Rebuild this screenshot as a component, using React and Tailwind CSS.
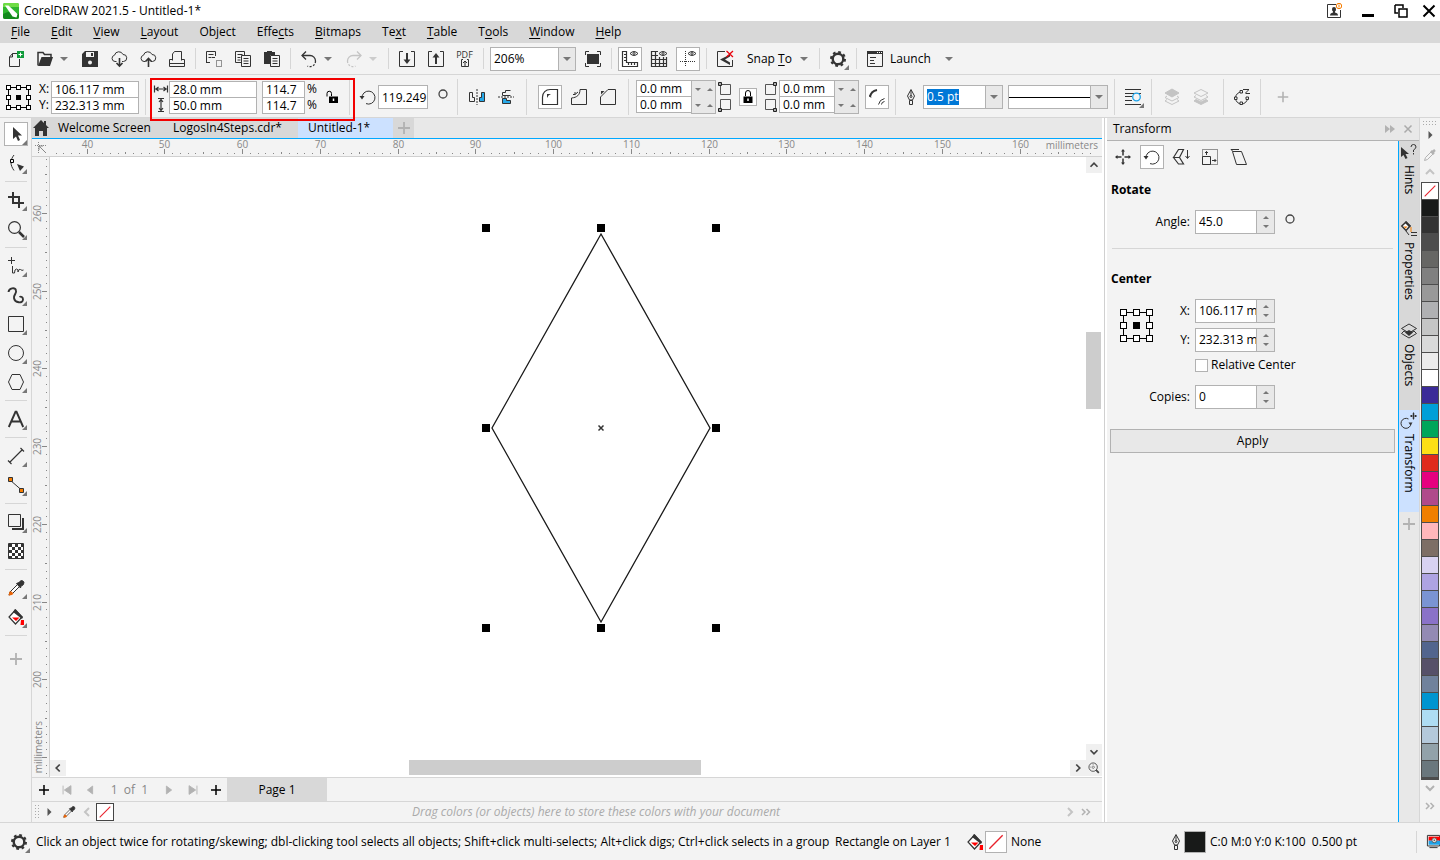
import { useState } from "react";

const INK = "#333";

const icons = {
    newDoc: (
        <>
            <path d="M9 2.5H4.5L1.500 6v9.500h10V8" />
            <path d="M4.500 2.500V6H1.500" />
            <path d="M9 0h7v7H9z" fill="#0f9b3a" stroke="none" />
            <path d="M12.500 1.500v4M10.500 3.500h4" stroke="#fff" />
        </>
    ),
    open: (
        <>
            <path d="M1 14.500V1.500h5l1.500 2H14v3" strokeWidth="1.500" />
            <path d="M1 15 4.500 6H16l-3 9z" fill={INK} stroke="none" />
        </>
    ),
    save: (
        <path d="M3 0h13v16H0V3zM4 1v5h8V1zM9 2v3h2V2zM8 9.500a2 2 0 1 0 0 4 2 2 0 0 0 0-4z" fill={INK} fillRule="evenodd" stroke="none" />
    ),
    cloudDown: (
        <>
            <path d="M5.500 10.500H4a3.200 3.200 0 0 1-.5-6.300A4.500 4.500 0 0 1 12 3.500a3.500 3.500 0 0 1 .5 7H11" />
            <path d="M8.500 7v8M5.500 12l3 3 3-3" strokeWidth="1.600" />
        </>
    ),
    cloudUp: (
        <>
            <path d="M5.500 10.500H4a3.200 3.200 0 0 1-.5-6.300A4.500 4.500 0 0 1 12 3.500a3.500 3.500 0 0 1 .5 7H11" />
            <path d="M8.500 16V8M5.500 10.500l3-3 3 3" strokeWidth="1.600" />
        </>
    ),
    print: (
        <>
            <path d="M3.500 9.500V3l2-2.500h7v9" />
            <path d="M3.500 8.500H.5v7h15v-7h-3M.5 12.500h15" />
        </>
    ),
    cut: (
        <>
            <path d="M4 11.500H.5v-11h9V5M2.500 3.500h5M2.500 6.500h3" />
            <path d="M10.500 9.500h5v6h-5z" strokeDasharray="1 1" />
            <path d="M.5 12v-3M6 6.500h3" />
        </>
    ),
    copy: (
        <>
            <path d="M6 11.500H.5v-11h9V4M2.500 3.500h5M2.500 6.500h3M2.500 9h3" />
            <path d="M6.500 4.500h9v11h-9zM8.500 7.500h5M8.500 10h5M8.500 12.500h5" />
        </>
    ),
    paste: (
        <>
            <path d="M0 1h3V0h5v1h3v3H6v9H0z" fill={INK} stroke="none" />
            <path d="M6.500 4.500h9v11h-9zM8.500 7.500h5M8.500 10h5M8.500 12.500h5" />
        </>
    ),
    undo: (
        <>
            <path d="M1.500 4.500H9a5.500 5.500 0 0 1 5.500 5.500" strokeWidth="1.300" />
            <path d="M14.500 10a5.500 5.500 0 0 1-8 5" strokeDasharray="2 1.500" strokeWidth="1.300" />
            <path d="M5 .5l-4 4 4 4" strokeWidth="1.300" />
        </>
    ),
    redo: (
        <>
            <path d="M14.500 4.500H7A5.500 5.500 0 0 0 1.500 10" strokeWidth="1.300" />
            <path d="M1.500 10a5.500 5.500 0 0 0 8 5" strokeDasharray="2 1.500" strokeWidth="1.300" />
            <path d="M11 .5l4 4-4 4" strokeWidth="1.300" />
        </>
    ),
    importDoc: (
        <>
            <path d="M4 .5H.5v15h15V.5H12" />
            <path d="M8 2v8" strokeWidth="2" />
            <path d="M4.500 8.500h7L8 13z" fill={INK} stroke="none" />
        </>
    ),
    exportDoc: (
        <>
            <path d="M4 .5H.5v15h15V.5H12" />
            <path d="M8 13V5" strokeWidth="2" />
            <path d="M4.500 6.500h7L8 2z" fill={INK} stroke="none" />
        </>
    ),
    fullScreen: (
        <>
            <path d="M2 3h12v10H2z" fill={INK} stroke="none" />
            <path d="M.5 4V.5H4M12 .5h3.500V4M15.500 12v3.500H12M4 15.500H.5V12" />
        </>
    ),
    rulers: (
        <>
            <path d="M.5.500h4v11h11v4H.5zM2 3.500h2M2 6.500h2M2 9.500h2M6.500 14v-2M9.500 14v-2M12.500 14v-2" strokeWidth="1.200" />
            <path d="M8 2.500q4-4 8 0-4 4-8 0z" />
            <circle cx="12" cy="2.500" r="1" />
        </>
    ),
    grid: (
        <>
            <path d="M7 .5H.5v15h15V6M.5 4.500H7M.5 8.500h15M.5 12.500h15M4.500.500v15M8.500 6v9.500M12.500 6v9.500" strokeWidth="1.200" />
            <path d="M8 2.500q4-4 8 0-4 4-8 0z" />
            <circle cx="12" cy="2.500" r="1" />
        </>
    ),
    guides: (
        <>
            <path d="M5.500 0v16M0 10.500h16" strokeDasharray="1 1" />
            <path d="M8 2.500q4-4 8 0-4 4-8 0z" />
            <circle cx="12" cy="2.500" r="1" />
        </>
    ),
    snapOff: (
        <>
            <path d="M8 .5H.5v15h15V9" />
            <path d="M13 3.500v2L8 8.500l5 3v2.500L3 8.500z" fill={INK} stroke="none" />
            <path d="m9.500 0 6.500 6M16 0 9.500 6" stroke="#e8000b" strokeWidth="1.300" />
        </>
    ),
    gear: (
        <>
            <circle cx="8" cy="8" r="5.300" strokeWidth="2.400" />
            <circle cx="8" cy="8" r="7" strokeWidth="2" strokeDasharray="2.750 2.750" />
        </>
    ),
    launch: (
        <>
            <path d="M.5.500h15v15H.5zM3 6.500h6M3 9.500h4M3 12.500h5" />
            <path d="M0 0h16v3H0z" fill={INK} stroke="none" />
            <path d="M10 1.500h5" stroke="#fff" strokeDasharray="1 1" />
        </>
    ),
    unlock: (
        <>
            <path d="M2 7.500V4.500a2.200 2.200 0 0 1 4.500 0V7" stroke="#000" />
            <path d="M4 7.500h9V14H4z" fill="#000" stroke="none" />
            <path d="M8.500 9.500v2.500" stroke="#fff" strokeWidth="1.500" />
        </>
    ),
    lock: (
        <>
            <path d="M5.500 7V4a2.500 2.500 0 0 1 5 0v3" stroke="#000" />
            <path d="M3.500 7.500h9V14h-9z" fill="#000" stroke="none" />
            <path d="M8 9.500v2.500" stroke="#fff" strokeWidth="1.500" />
        </>
    ),
    rotate: (
        <>
            <path d="M2 9A6.500 6.500 0 1 1 6 14.600" />
            <path d="M-.5 7h5L2 10.500z" fill={INK} stroke="none" />
        </>
    ),
    mirrorH: (
        <>
            <path d="M.5 3.500h3v5h2v4h-5z" />
            <path d="M8 0v16" strokeDasharray="2 1" />
            <path d="M15.500 3.500h-3v5h-2v4h5z" fill="#27a9e8" />
        </>
    ),
    mirrorV: (
        <>
            <path d="M12.500 1.500h-5v2h-3v3h8" />
            <path d="M0 8h16" strokeDasharray="2 1" />
            <path d="M4.500 9.500h4v2h4v3h-8z" fill="#27a9e8" />
        </>
    ),
    roundCorner: (
        <>
            <path d="M.5 15.500V8A7.500 7.500 0 0 1 8 .5h7.500v15z" strokeWidth="1.200" />
            <path d="M5 9V5h4L6.500 6.500z" fill={INK} stroke="none" />
        </>
    ),
    scallop: (
        <>
            <path d="M.5 9v6.500h15V.5H9C9 6 6 8.500.5 9z" />
            <path d="M2 5.500h2V3M4 5.500 7 3" />
        </>
    ),
    chamfer: (
        <>
            <path d="M.5 8v7.500h15V.5H8z" />
            <path d="M1 5.500V2h3.500z" fill={INK} stroke="none" />
        </>
    ),
    relCorner: (
        <>
            <path d="M1 8q1-6 7-7" strokeWidth="2" />
            <path d="M.5 6 2 8.500" />
            <path d="M9.500 15.500q1-5 6-6M12.500 15.500q0-2.500 3-3" />
        </>
    ),
    pen: (
        <>
            <path d="M8 .5 4.500 7l2 4h3l2-4zM6.500 11.500h3v4h-3zM8 2v5" />
            <circle cx="8" cy="7.500" r="1" />
        </>
    ),
    wrap: (
        <>
            <path d="M0 .5h16M0 4.500h16M0 7.500h7M0 11.500h7M0 15.500h16" />
            <circle cx="11.500" cy="8" r="3.800" fill="#f3f3f3" stroke="#1ca3ea" strokeWidth="1.300" />
        </>
    ),
    layersFront: (
        <>
            <path d="m8 0 7 4-7 4-7-4z" fill="#c4c4c4" />
            <path d="m3 7-2 1.500 7 3.500 7-3.500L13 7M3 10.500 1 12l7 3.500 7-3.500-2-1.500" />
        </>
    ),
    layersBack: (
        <>
            <path d="m8 .5 7 3.500-7 3.500L1 4zM3 6.500 1 8l7 3.500L15 8l-2-1.500" />
            <path d="m3 10.500-2 1.500 7 3.500 7-3.500-2-1.500-5 2.500z" fill="#c4c4c4" />
        </>
    ),
    toCurves: (
        <>
            <path d="M7.500 3a6 6 0 0 0-6 6 6 6 0 0 0 6 6 6 6 0 0 0 6-6M9 .5h6M11.500 4.500H16M14.500 1l-3 3" />
            <path d="M6 1.500h2.500V4H6zM.5 8H3v2.500H.5zM12 8h2.500v2.500H12zM6 13h2.500v2.500H6z" fill="#f3f3f3" />
        </>
    ),
    pick: <path d="M5 1v12l3-2.500 2 4.500 2-1-2-4.500h4z" fill={INK} stroke="none" />,
    shape: (
        <>
            <path d="M6 0C2 5 2 10 6 15.500" />
            <path d="M2.500 4.500h3v3h-3z" fill="#f3f3f3" stroke="#000" />
            <path d="m9 9 7 2.500-4 4.500z" fill={INK} stroke="none" />
        </>
    ),
    crop: (
        <path d="M0 5h11v11M5 0v11h11" strokeWidth="2" />
    ),
    zoom: (
        <>
            <circle cx="6.500" cy="6.500" r="5.900" strokeWidth="1.200" />
            <path d="m11 11 5 5" strokeWidth="2.500" />
        </>
    ),
    freehand: (
        <>
            <path d="M3.500-1v7M0 2.500h7" />
            <path d="M4.500 8v7h2q0-4 2-4t1.500 3q1-4 2.500-2.500t3 .5" />
        </>
    ),
    artistic: (
        <path d="M.5 5C1 1 7 0 8 3.500c1 3-2.500 4-2 7.500.8 5 9 6 9 1.500 0-2.500-2-3.500-3.500-2.500" strokeWidth="1.900" />
    ),
    rect: <path d="M.5.500h15v15H.5z" />,
    ellipse: <circle cx="8" cy="8" r="7.500" />,
    polygon: <path d="M4 .5h8l3.500 7.500-3.500 7.500H4L.5 8z" />,
    textTool: <path d="M.8 16 7.500.8h1L15.200 16M3.500 10.500h9" strokeWidth="1.900" />,
    lineTool: <path d="m1.500 14.500 13-13M0 12.500 3.500 16M12.500 0 16 3.500" strokeWidth="1.200" />,
    connector: (
        <>
            <path d="m2 3 11.500 10" />
            <path d="M.5.500h4v4h-4zM11.500 11.500h4v4h-4z" fill="#f57c00" />
        </>
    ),
    shadow: (
        <>
            <path d="M.5.500h12v12H.5z" />
            <path d="M15 4v11H4" strokeWidth="2" />
        </>
    ),
    transparency: (
        <>
            <path d="M.5.500h15v15H.5z" fill="#fff" />
            <path
                d="M1 1h3v3H1zM7 1h3v3H7zM13 1h3v3h-3zM4 4h3v3H4zM10 4h3v3h-3zM1 7h3v3H1zM7 7h3v3H7zM13 7h3v3h-3zM4 10h3v3H4zM10 10h3v3h-3zM1 13h3v3H1zM7 13h3v3H7zM13 13h3v3h-3z"
                fill={INK}
                stroke="none"
            />
        </>
    ),
    dropper: (
        <>
            <path d="m1 15 1-3 7.500-7.500 2 2L4 14z" fill="#fff" />
            <path d="m.5 15.500 1-4h2l2 2-1.500 1.500z" fill="#e8650a" stroke="none" />
            <path d="m8.500 3.500 2.500-1Q13-.5 15 1t0 4l-2 1-.5 2z" fill={INK} />
        </>
    ),
    fill: (
        <>
            <path d="M7.500 1 1 8l6.500 7L14 8z" fill="#fff" strokeWidth="1.200" />
            <path d="m7 0 8 8-1 2-9-7z" fill={INK} stroke="none" />
            <path d="M4 8.500h7.500L8 12zM13 11l3 0v5h-3.500z" fill="#f00" stroke="none" />
        </>
    ),
    position: (
        <>
            <path d="M8 1v5.500M8 9.500V15M1 8h5.500M9.500 8H15" strokeWidth="1.500" />
            <path d="m6 2.500 2-2.500 2 2.500zM6 13.500l2 2.500 2-2.500zM2.500 6 0 8l2.500 2zM13.500 6 16 8l-2.500 2z" fill={INK} stroke="none" />
        </>
    ),
    scale: (
        <>
            <path d="M.5 8.500 5.500.5h5l-4 8zM.5 8.500l5 6.500h5l-4-6.500" strokeWidth="1.200" />
            <path d="M14.500 1v8M12.500 7l2 2.500 2-2.500" />
        </>
    ),
    size: (
        <>
            <path d="M.5.500h15v15H.5z" strokeDasharray="1 1" />
            <path d="M.5 7.500h8v8h-8zM4.500 6V2.500M3 4l1.500-1.500L6 4M10 11.500h4M12.500 10l1.500 1.500-1.500 1.500" fill="#f3f3f3" />
        </>
    ),
    skew: (
        <>
            <path d="M1.500 2.500h9l5 13h-10zM0 .5h8M0 .5l2 2" />
        </>
    ),
    hints: (
        <>
            <path d="M0 3v10l2.500-2 2 4 2-1-2-4H8z" fill={INK} stroke="none" />
            <path d="M10 3q0-2.500 2.500-2.500T15 3q0 1.500-2.500 3v2M12.500 9v1.500" />
        </>
    ),
    properties: (
        <>
            <path d="M5 1 .8 5 5 9.500 9 5z" strokeWidth="1.500" fill="#fff" />
            <path d="M5 0l5 5-2 1-4-4z" fill={INK} stroke="none" />
            <path d="M2.500 5.500h4L4.500 7.500z" fill="#f57c00" stroke="none" />
            <path d="M10 6v5" stroke="#f57c00" />
            <path d="M10 11.500h6M10 14.500h6M5 10l3 4" />
        </>
    ),
    objects: (
        <>
            <path d="m8 1 7.500 4.500L8 10 .5 5.500z" />
            <path d="M3 8 .5 10.500 8 15l7.500-4.500L13 8l-5 3z" />
            <path d="m8 7 4 2.500L8 13l-4-3.500z" fill={INK} stroke="none" />
        </>
    ),
    transform: (
        <>
            <path d="M7.500 6a5 5 0 1 0 2.500 4.500" />
            <path d="M7.500 9.500h4l-2 3z" fill={INK} stroke="none" />
            <path d="M12.500-.5v7M9 3h7M11.500 1h2M11.500 5h2M10.500 2v2M14.500 2v2" />
        </>
    ),
    home: <path d="M8 0 0 8h2v8h4v-5h4v5h4V8h2L13 5V1h-2v2z" fill={INK} stroke="none" />,
    plus: <path d="M8 2v12M2 8h12" strokeWidth="1.800" />,
    thinPlus: <path d="M8 3v10M3 8h10" strokeWidth="1.500" />,
    degree: <circle cx="8" cy="8" r="4" strokeWidth="1.300" />,
    chevronLeft: <path d="m10 4-4 4 4 4" strokeWidth="2" />,
    chevronRight: <path d="m6 4 4 4-4 4" strokeWidth="2" />,
    chevronUp: <path d="m4 10 4-4 4 4" strokeWidth="2" />,
    chevronDown: <path d="m4 6 4 4 4-4" strokeWidth="2" />,
    doubleRight: <path d="m4 5 3 3-3 3M8.500 5l3 3-3 3" strokeWidth="1.500" />,
    first: <path d="M3.500 3v10M12.500 3v10L5 8z" fill="#b2b2b2" />,
    prev: <path d="M11 3.500v9L5 8z" fill="#b2b2b2" />,
    next: <path d="M5 3.500v9L11 8z" fill="#b2b2b2" />,
    last: <path d="M12.500 3v10M3.500 3v10L11 8z" fill="#b2b2b2" />,
    play: <path d="M6.500 4v8L10.500 8z" fill="#555" stroke="none" />,
    zoomPage: (
        <>
            <circle cx="7" cy="7" r="4.800" />
            <path d="m10.500 10.500 3 3" strokeWidth="2" />
            <path d="M7 4v6M4 7h6" strokeDasharray="1 1" />
        </>
    ),
    close: <path d="m4.500 4.500 7 7M11.500 4.500l-7 7" strokeWidth="1.500" />,
    width: <path d="M1.500 4.500v7M14.500 4.500v7M2 8h12M5.500 6 3 8l2.500 2M10.500 6 13 8l-2.500 2" strokeWidth="1.200" />,
    height: <path d="M5 1.500h6M5 14.500h6M8 2v12M6 5l2-2.500L10 5M6 11l2 2.500 2-2.500" strokeWidth="1.200" />,
    proofs: (
        <>
            <path d="M.5.500h15v13H.5zM3 15.500h10" strokeWidth="1.200" />
            <path d="M2 2h14v5H2z" fill="#f00" stroke="none" />
            <path d="M2 7h14v5H2z" fill="#1ca3ea" stroke="none" />
            <circle cx="9" cy="6.500" r="3" fill="#ddd" stroke="#555" />
            <circle cx="9" cy="6.500" r="1" fill="#555" stroke="none" />
        </>
    ),
};

function Icon({ name, className = "size-4 text-[#333]" }) {
    return (
        <svg viewBox="0 0 16 16" className={`shrink-0 overflow-visible ${className}`} fill="none" stroke="currentColor" aria-hidden="true">
            {icons[name]}
        </svg>
    );
}

function Caret({ up = false, small = false, className = "text-[#777]" }) {
    return (
        <svg viewBox="0 0 8 4" className={`shrink-0 ${small ? "h-[3px] w-[6px]" : "h-1 w-2"} ${className}`} fill="currentColor" aria-hidden="true">
            <path d={up ? "M0 4h8L4 0z" : "M0 0h8L4 4z"} />
        </svg>
    );
}

function ToolButton({ icon, label, boxed = false, flyout = false, className = "size-4 text-[#333]" }) {
    return (
        <div className="flex h-[29px] w-[29px] shrink-0 items-center justify-center">
            <button
                type="button"
                aria-label={label}
                className={`relative flex size-6 items-center justify-center ${boxed ? "border border-[#b2b2b2] bg-white" : ""}`}
            >
                <Icon name={icon} className={className} />
                {flyout && (
                    <svg viewBox="0 0 5 5" className={`absolute size-[5px] ${boxed ? "right-0 bottom-0" : "right-px bottom-px"}`} fill="#777">
                        <path d="M5 0v5H0z" />
                    </svg>
                )}
            </button>
        </div>
    );
}

function Separator() {
    return (
        <div className="flex w-2 shrink-0 justify-center self-stretch">
            <div className="w-px bg-[#d6d6d6]" />
        </div>
    );
}

function CaretButton({ label, disabled = false }) {
    return (
        <button type="button" aria-label={label} className="flex h-6 w-4 shrink-0 items-center pl-px">
            <Caret className={disabled ? "text-[#ccc]" : "text-[#777]"} />
        </button>
    );
}

const menus = [
    ["", "F", "ile"],
    ["", "E", "dit"],
    ["", "V", "iew"],
    ["", "L", "ayout"],
    ["Ob", "j", "ect"],
    ["Effe", "c", "ts"],
    ["", "B", "itmaps"],
    ["Te", "x", "t"],
    ["", "T", "able"],
    ["T", "o", "ols"],
    ["", "W", "indow"],
    ["", "H", "elp"],
];

function TitleBar() {
    return (
        <header className="flex h-[21px] items-center bg-white pl-[3px]">
            <svg viewBox="0 0 16 16" className="size-4" aria-hidden="true">
                <rect width="16" height="16" rx="2" fill="#2fb62f" />
                <path d="M0 11q8-5 16 0v3q0 2-2 2H2q-2 0-2-2z" fill="#138a1c" />
                <path d="M0 2q0-2 2-2h12q2 0 2 2v2H0z" fill="#6fdc45" />
                <path d="M2 2.500h3.500l9 8.500-1 3.500-4-1z" fill="#fff" />
            </svg>
            <h1 className="ml-[5px] flex-1">CorelDRAW 2021.5 - Untitled-1*</h1>
            <button type="button" aria-label="Account" className="mr-5">
                <svg viewBox="0 0 16 16" className="size-4" fill="none" stroke="#333">
                    <path d="M10 1.500H1.500v13h13V7" />
                    <path d="M8 4a2 2 0 0 1 2 2q0 2-1 2.500v1q3 .5 3 3H4q0-2.500 3-3v-1Q6 8 6 6a2 2 0 0 1 2-2z" fill="#333" stroke="none" />
                    <circle cx="13" cy="3" r="2.700" fill="#fff" stroke="#f57c00" />
                    <path d="M13 1.500v3" stroke="#f57c00" />
                </svg>
            </button>
            <button type="button" aria-label="Minimize" className="mr-5 flex h-3 w-3 items-end">
                <span className="h-[3px] w-full bg-black" />
            </button>
            <button type="button" aria-label="Restore" className="mr-3.5">
                <svg viewBox="0 0 14 14" className="size-3.5" fill="none" stroke="#000" strokeWidth="1.500">
                    <path d="M1 1h8v3M4 9H1V1M5 5h8v8H5z" />
                </svg>
            </button>
            <button type="button" aria-label="Close" className="mr-1">
                <svg viewBox="0 0 14 14" className="size-3.5" fill="none" stroke="#000" strokeWidth="2">
                    <path d="m1.500 1.500 11 11M12.500 1.500l-11 11" />
                </svg>
            </button>
        </header>
    );
}

function MenuBar() {
    return (
        <nav className="flex h-[22px] items-center gap-[21px] bg-[#d8d8d8] pl-[11px]">
            {menus.map(([before, key, after]) => (
                <button key={before + key + after} type="button">
                    {before}
                    <span className="underline underline-offset-2">{key}</span>
                    {after}
                </button>
            ))}
        </nav>
    );
}

function StandardBar() {
    return (
        <div className="flex h-8 items-center border-b border-[#d6d6d6] py-[5px] pl-px">
            <ToolButton icon="newDoc" label="New" />
            <ToolButton icon="open" label="Open" />
            <CaretButton label="Recent files" />
            <ToolButton icon="save" label="Save" />
            <ToolButton icon="cloudDown" label="Open from cloud" />
            <ToolButton icon="cloudUp" label="Save to cloud" />
            <ToolButton icon="print" label="Print" />
            <Separator />
            <ToolButton icon="cut" label="Cut" />
            <ToolButton icon="copy" label="Copy" />
            <ToolButton icon="paste" label="Paste" />
            <Separator />
            <ToolButton icon="undo" label="Undo" />
            <CaretButton label="Undo history" />
            <ToolButton icon="redo" label="Redo" className="size-4 text-[#c4c4c4]" />
            <CaretButton label="Redo history" disabled />
            <Separator />
            <ToolButton icon="importDoc" label="Import" />
            <ToolButton icon="exportDoc" label="Export" />
            <button type="button" aria-label="Publish to PDF" className="flex h-6 w-[29px] flex-col items-center pt-[3px] text-[9px] leading-[9px] text-[#333]">
                <span>PDF</span>
                <svg viewBox="0 0 8 8" className="size-2 overflow-visible" fill="none" stroke="#333" aria-hidden="true">
                    <path d="M2 .5H.5v7h7v-7H6M4 7V2M2 4l2-2 2 2" />
                </svg>
            </button>
            <Separator />
            <div className="relative mr-0.5 ml-[3px] flex">
                <select aria-label="Zoom level" className="h-6 w-[86px] appearance-none border border-[#b2b2b2] bg-white pl-[3px]">
                    <option>206%</option>
                </select>
                <span className="pointer-events-none absolute inset-y-px right-px flex w-[17px] items-center justify-center border-l border-[#b2b2b2] bg-[#e8e8e8]">
                    <Caret />
                </span>
            </div>
            <ToolButton icon="fullScreen" label="Full-screen preview" />
            <Separator />
            <ToolButton icon="rulers" label="Show rulers" boxed />
            <ToolButton icon="grid" label="Show grid" />
            <ToolButton icon="guides" label="Show guidelines" boxed />
            <Separator />
            <ToolButton icon="snapOff" label="Snap off" />
            <button type="button" className="flex h-6 w-[76px] items-center justify-between pr-[7px] pl-2">
                <span>
                    Snap <span className="underline underline-offset-2">T</span>o
                </span>
                <Caret />
            </button>
            <Separator />
            <ToolButton icon="gear" label="Options" flyout />
            <Separator />
            <ToolButton icon="launch" label="Application launcher" />
            <button type="button" className="flex h-6 w-16 items-center justify-between pl-px">
                Launch
                <Caret />
            </button>
        </div>
    );
}

function OriginGrid({ size, box, className }) {
    const edge = box / 2 + 0.5;
    const middle = size / 2;
    const spots = [edge, middle, size - edge];
    return (
        <svg viewBox={`0 0 ${size} ${size}`} width={size} height={size} className={`shrink-0 ${className}`} stroke="#000" aria-hidden="true">
            <path d={`M${edge} ${edge}H${size - edge}V${size - edge}H${edge}z`} fill="none" />
            {spots.map(y =>
                spots.map(x => (
                    <rect
                        key={`${x}-${y}`}
                        x={x - box / 2}
                        y={y - box / 2}
                        width={box}
                        height={box}
                        fill={x === middle && y === middle ? "#000" : "#fff"}
                    />
                ))
            )}
        </svg>
    );
}

// two inputs stacked with a shared middle border
function FieldPair({ labels, values, width }) {
    return (
        <div className={`flex shrink-0 flex-col ${width}`}>
            <input aria-label={labels[0]} defaultValue={values[0]} className="h-[17px] w-full border border-[#b2b2b2] bg-white pl-[3px]" />
            <input aria-label={labels[1]} defaultValue={values[1]} className="-mt-px h-[17px] w-full border border-[#b2b2b2] bg-white pl-[3px]" />
        </div>
    );
}

function CornerFields({ side }) {
    return (
        <div className="flex shrink-0">
            <FieldPair labels={[`Top ${side} radius`, `Bottom ${side} radius`]} values={["0.0 mm", "0.0 mm"]} width="w-14" />
            <div className="-ml-px flex w-[25px] flex-col border border-[#b2b2b2] bg-[#e8e8e8]">
                {["top", "bottom"].map(row => (
                    <div key={row} className="flex h-4 items-center justify-center gap-[6px]">
                        <Caret small />
                        <Caret small up />
                    </div>
                ))}
            </div>
        </div>
    );
}

function CornerMarks({ side }) {
    const x = side === "left" ? 0.5 : 10.5;
    return (
        <svg viewBox="0 0 15 30" className="h-[30px] w-[15px] shrink-0" fill="#f3f3f3" stroke="#555" aria-hidden="true">
            <path d="M2.500 2.500h10v10h-10zM2.500 17.500h10v10h-10z" />
            <path d={`M${x} .5h3v3h-3zM${x} 26.500h3v3h-3z`} fill="#aaa" stroke="#222" />
        </svg>
    );
}

function PropertyBar() {
    return (
        <div className="relative flex h-[43px] items-center border-b border-[#d6d6d6] pt-1 pb-0.5 pl-[6px]">
            <OriginGrid size={25} box={4} className="" />
            <div className="ml-2 flex w-3 flex-col leading-4">
                <span>X:</span>
                <span>Y:</span>
            </div>
            <FieldPair labels={["X position", "Y position"]} values={["106.117 mm", "232.313 mm"]} width="w-[88px]" />
            <div className="w-0.5" />
            <Separator />
            <div className="ml-1 flex flex-col">
                <Icon name="width" />
                <Icon name="height" />
            </div>
            <FieldPair labels={["Width", "Height"]} values={["28.0 mm", "50.0 mm"]} width="w-[88px]" />
            <div className="w-[5px]" />
            <FieldPair labels={["Scale X", "Scale Y"]} values={["114.7", "114.7"]} width="w-[43px]" />
            <div className="ml-0.5 flex w-[14px] flex-col leading-4">
                <span>%</span>
                <span>%</span>
            </div>
            <button type="button" aria-label="Lock ratio" className="mx-1">
                <Icon name="unlock" />
            </button>
            <Separator />
            <div className="w-[7px]" />
            <Icon name="rotate" />
            <input aria-label="Angle of rotation" defaultValue="119.249" className="ml-0.5 h-6 w-[50px] border border-[#b2b2b2] bg-white pl-[3px]" />
            <Icon name="degree" className="mb-1.5 ml-[7px] size-4 text-[#444]" />
            <div className="w-0.5" />
            <Separator />
            <div className="w-px" />
            <ToolButton icon="mirrorH" label="Mirror horizontally" />
            <ToolButton icon="mirrorV" label="Mirror vertically" />
            <div className="w-0.5" />
            <Separator />
            <div className="w-[5px]" />
            <ToolButton icon="roundCorner" label="Round corner" boxed />
            <ToolButton icon="scallop" label="Scalloped corner" />
            <ToolButton icon="chamfer" label="Chamfered corner" />
            <div className="w-0.5" />
            <Separator />
            <div className="w-1" />
            <CornerFields side="left" />
            <div className="w-0.5" />
            <CornerMarks side="left" />
            <button type="button" aria-label="Edit corners together" className="mx-[6px] flex size-[18px] shrink-0 items-center justify-center border border-[#b2b2b2] bg-white">
                <Icon name="lock" />
            </button>
            <CornerMarks side="right" />
            <div className="w-px" />
            <CornerFields side="right" />
            <div className="w-[3px]" />
            <ToolButton icon="relCorner" label="Relative corner scaling" boxed />
            <Separator />
            <Icon name="pen" className="mx-1 size-4 text-[#333]" />
            <div className="flex h-6 w-20 items-center border border-[#b2b2b2] bg-white pl-[3px]">
                <input aria-label="Outline width" defaultValue="0.5 pt" className="h-4 w-[32px] bg-[#0078d7] text-white" />
                <button type="button" aria-label="Outline width list" className="ml-auto flex h-full w-[17px] items-center justify-center border-l border-[#b2b2b2] bg-[#e8e8e8]">
                    <Caret />
                </button>
            </div>
            <div className="relative ml-[5px] flex">
                <select aria-label="Line style" className="h-6 w-[100px] appearance-none border border-[#b2b2b2] bg-white" />
                <span className="pointer-events-none absolute inset-y-px right-px flex w-[98px] items-center">
                    <span className="h-px flex-1 bg-black" />
                    <span className="flex h-full w-[17px] items-center justify-center border-l border-[#b2b2b2] bg-[#e8e8e8]">
                        <Caret />
                    </span>
                </span>
            </div>
            <div className="w-0.5" />
            <Separator />
            <ToolButton icon="wrap" label="Wrap text" flyout />
            <Separator />
            <div className="w-0.5" />
            <ToolButton icon="layersFront" label="To front of layer" className="size-4 text-[#c4c4c4]" />
            <ToolButton icon="layersBack" label="To back of layer" className="size-4 text-[#c4c4c4]" />
            <div className="w-1" />
            <Separator />
            <ToolButton icon="toCurves" label="Convert to curves" />
            <Separator />
            <div className="w-1" />
            <ToolButton icon="plus" label="Customize" className="size-3.5 text-[#b2b2b2]" />
            <div className="pointer-events-none absolute top-[3px] left-[150px] h-[43px] w-[205px] border-2 border-[#f20000]" />
        </div>
    );
}

const toolGroups = [
    [["pick", "Pick"], ["shape", "Shape"]],
    [["crop", "Crop"], ["zoom", "Zoom"]],
    [["freehand", "Freehand"], ["artistic", "Artistic media"], ["rect", "Rectangle"], ["ellipse", "Ellipse"], ["polygon", "Polygon"]],
    [["textTool", "Text"]],
    [["lineTool", "Dimension"], ["connector", "Connector"]],
    [["shadow", "Drop shadow"], ["transparency", "Transparency"]],
    [["dropper", "Color eyedropper"], ["fill", "Interactive fill"]],
];

function Toolbox() {
    return (
        <aside className="flex w-8 shrink-0 flex-col items-center border-r border-[#d6d6d6] pt-px">
            {toolGroups.map((group, i) => (
                <div key={i} className="flex flex-col items-center">
                    {group.map(([icon, label]) => (
                        <ToolButton key={icon} icon={icon} label={label} boxed={icon === "pick"} flyout={icon !== "transparency"} />
                    ))}
                    <div className="flex h-2 items-center">
                        <div className="h-px w-[22px] bg-[#d6d6d6]" />
                    </div>
                </div>
            ))}
            <div className="h-[5px]" />
            <ToolButton icon="plus" label="Customize toolbox" className="size-4 text-[#b2b2b2]" />
        </aside>
    );
}

const PX_PER_MM = 7.775;

// one tick for every millimetre; start is the pixel offset of the first
function ticks(from, to, start) {
    const step = from < to ? 1 : -1;
    return Array.from({ length: Math.abs(to - from) + 1 }, (_, i) => ({
        mm: from + i * step,
        at: Math.round(start + i * PX_PER_MM) + 0.5,
    }));
}

function HorizontalRuler() {
    return (
        <div className="relative h-[17px] min-w-0 flex-1 overflow-x-clip">
            <svg className="h-full w-full overflow-visible" stroke="#888" aria-hidden="true">
                {ticks(36, 169, 5.500).map(({ mm, at }) => (
                    <g key={mm}>
                        <path d={`M${at} ${mm % 10 === 0 ? 10 : mm % 5 === 0 ? 13 : 14}V15`} />
                        {mm % 10 === 0 && mm < 165 && (
                            <text x={at} y="9" textAnchor="middle" fontSize="10" fill="#888" stroke="none">
                                {mm}
                            </text>
                        )}
                    </g>
                ))}
            </svg>
            <span className="absolute top-0 right-1 bg-[#f3f3f3] text-[10px] leading-3 text-[#888]">millimeters</span>
        </div>
    );
}

function VerticalRuler() {
    return (
        <div className="relative w-[18px] shrink-0 overflow-y-clip border-r border-[#d0d0d0]">
            <svg className="absolute inset-0 h-full w-full overflow-visible" stroke="#888" aria-hidden="true">
                {ticks(267, 187, 1.500).map(({ mm, at }) => (
                    <g key={mm}>
                        <path d={`M${mm % 10 === 0 ? 10 : mm % 5 === 0 ? 13 : 14} ${at}H15`} />
                        {mm % 10 === 0 && mm > 195 && (
                            <text transform={`translate(9 ${at}) rotate(-90)`} textAnchor="middle" fontSize="10" fill="#888" stroke="none">
                                {mm}
                            </text>
                        )}
                    </g>
                ))}
            </svg>
            <span className="absolute bottom-1 left-0 rotate-180 text-[10px] leading-3 text-[#888] [writing-mode:vertical-rl]">millimeters</span>
        </div>
    );
}

function Drawing() {
    const xs = [436, 551, 666];
    const ys = [71, 271, 471];
    return (
        <svg className="absolute inset-0 h-full w-full" aria-label="Rectangle on Layer 1">
            <path d="M551 77 660 271 551 465 442 271z" fill="none" stroke="#1a1a1a" strokeWidth="1.300" />
            <path d="m548.500 268.500 5 5M553.500 268.500l-5 5" stroke="#333" strokeWidth="1.500" />
            {ys.map(y =>
                xs.map(x =>
                    x === 551 && y === 271 ? null : <rect key={`${x}-${y}`} x={x - 4} y={y - 4} width="8" height="8" />
                )
            )}
        </svg>
    );
}

function ScrollArrow({ icon, label }) {
    return (
        <button type="button" aria-label={label} className="flex size-4 shrink-0 items-center justify-center bg-[#f0f0f0]">
            <Icon name={icon} className="size-3.5 text-[#444]" />
        </button>
    );
}

function Workspace() {
    return (
        <div className="flex min-h-[600px] flex-1">
            <VerticalRuler />
            <div className="flex min-w-0 flex-1 flex-col bg-white">
                <div className="flex min-h-0 flex-1">
                    <div className="relative min-w-0 flex-1">
                        <Drawing />
                    </div>
                    <div className="flex w-4 flex-col">
                        <ScrollArrow icon="chevronUp" label="Scroll up" />
                        <div className="grow-[159]" />
                        <div className="w-[15px] grow-[77] bg-[#cdcdcd]" />
                        <div className="grow-[334]" />
                        <ScrollArrow icon="chevronDown" label="Scroll down" />
                    </div>
                </div>
                <div className="flex h-[17px]">
                    <ScrollArrow icon="chevronLeft" label="Scroll left" />
                    <div className="grow-[342]" />
                    <div className="h-[15px] grow-[291] bg-[#cdcdcd]" />
                    <div className="grow-[368]" />
                    <ScrollArrow icon="chevronRight" label="Scroll right" />
                    <ScrollArrow icon="zoomPage" label="Navigator" />
                </div>
            </div>
        </div>
    );
}

function PageBar() {
    return (
        <div className="flex h-6 items-center border-t border-[#d6d6d6]">
            <button type="button" aria-label="Add page before" className="flex w-[23px] justify-center">
                <Icon name="thinPlus" className="size-4 text-black" />
            </button>
            <button type="button" aria-label="First page" className="flex w-[23px] justify-center">
                <Icon name="first" className="size-3.5 text-[#b2b2b2]" />
            </button>
            <button type="button" aria-label="Previous page" className="flex w-6 justify-center">
                <Icon name="prev" className="size-3.5 text-[#b2b2b2]" />
            </button>
            <span className="w-[55px] text-center whitespace-pre text-[#888]">1  of  1</span>
            <button type="button" aria-label="Next page" className="flex w-6 justify-center">
                <Icon name="next" className="size-3.5 text-[#b2b2b2]" />
            </button>
            <button type="button" aria-label="Last page" className="flex w-[23px] justify-center">
                <Icon name="last" className="size-3.5 text-[#b2b2b2]" />
            </button>
            <button type="button" aria-label="Add page after" className="flex w-[23px] justify-center">
                <Icon name="thinPlus" className="size-4 text-black" />
            </button>
            <button type="button" className="h-full w-[100px] bg-[#d8d8d8]">
                Page 1
            </button>
        </div>
    );
}

function NoColor({ className }) {
    return (
        <svg viewBox="0 0 18 18" className={`shrink-0 bg-white ${className}`} aria-hidden="true">
            <path d="m3 15 12-12" stroke="#e8222c" strokeWidth="1.200" />
        </svg>
    );
}

function DocumentPalette() {
    return (
        <div className="flex h-[21px] items-center border-t border-[#d6d6d6]">
            <div className="ml-0.5 h-4 w-[5px] bg-[radial-gradient(#aaa_1px,transparent_1px)] bg-[size:3px_3px]" />
            <button type="button" aria-label="Palette options" className="ml-0.5">
                <Icon name="play" />
            </button>
            <button type="button" aria-label="Sample color" className="ml-1.5">
                <Icon name="dropper" className="size-3 text-[#333]" />
            </button>
            <button type="button" aria-label="Scroll palette left" className="ml-1">
                <Icon name="chevronLeft" className="size-4 text-[#c4c4c4]" />
            </button>
            <button type="button" aria-label="No color" className="ml-px">
                <NoColor className="size-[18px] border border-[#444]" />
            </button>
            <p className="flex-1 pl-4 text-center text-[#aaa] italic">
                Drag colors (or objects) here to store these colors with your document
            </p>
            <button type="button" aria-label="Scroll palette right">
                <Icon name="chevronRight" className="size-4 text-[#c4c4c4]" />
            </button>
            <button type="button" aria-label="Expand palette" className="mr-2">
                <Icon name="doubleRight" className="size-4 text-[#b2b2b2]" />
            </button>
        </div>
    );
}

function DocumentArea() {
    return (
        <main className="flex min-w-0 flex-1 flex-col">
            <div className="flex h-[21px] border-b border-[#00a8ff] bg-[#e8e8e8]">
                <button type="button" className="flex w-[136px] items-center gap-[9px] bg-[#d8d8d8] pl-px">
                    <Icon name="home" />
                    Welcome Screen
                </button>
                <button type="button" className="w-[130px] bg-[#d8d8d8] pl-[5px] text-left">
                    LogosIn4Steps.cdr*
                </button>
                <button type="button" className="w-[95px] bg-[#cce1ff] pl-2.5 text-left">
                    Untitled-1*
                </button>
                <button type="button" aria-label="New tab" className="flex w-[21px] items-center justify-center bg-[#d8d8d8]">
                    <Icon name="plus" className="size-4 text-[#b2b2b2]" />
                </button>
            </div>
            <div className="flex h-[18px] border-b border-[#d0d0d0]">
                <div className="flex w-[18px] shrink-0 items-center justify-center">
                    <svg viewBox="0 0 12 12" className="size-3" fill="none" stroke="#888" aria-hidden="true">
                        <path d="M3.500 0v12M0 3.500h12" strokeDasharray="1 1" />
                        <path d="m4 4 7 7M4 8V4h4" />
                    </svg>
                </div>
                <HorizontalRuler />
            </div>
            <Workspace />
            <PageBar />
            <DocumentPalette />
        </main>
    );
}

function SpinField({ id, value }) {
    return (
        <div className="flex h-6 w-20 border border-[#b2b2b2] bg-white">
            <input id={id} defaultValue={value} className="w-[60px] min-w-0 pl-[3px]" />
            <div className="flex w-[18px] shrink-0 flex-col items-center justify-around border-l border-[#b2b2b2] bg-[#e8e8e8] py-0.5">
                <Caret small up />
                <Caret small />
            </div>
        </div>
    );
}

function TransformDocker() {
    const [relative, setRelative] = useState(false);

    return (
        <form className="min-w-0 flex-1" onSubmit={(e) => e.preventDefault()}>
            <div className="flex pt-px pb-px pl-px">
                <ToolButton icon="position" label="Position" />
                <ToolButton icon="rotate" label="Rotate" boxed />
                <ToolButton icon="scale" label="Scale and mirror" />
                <ToolButton icon="size" label="Size" />
                <ToolButton icon="skew" label="Skew" />
            </div>
            <h3 className="mt-2.5 pl-1 font-bold leading-4">Rotate</h3>
            <div className="mt-3 flex items-center">
                <label htmlFor="angle" className="w-[83px] text-right">Angle:</label>
                <div className="ml-[5px]">
                    <SpinField id="angle" value="45.0" />
                </div>
                <Icon name="degree" className="mb-1.5 ml-[7px] size-4 text-[#444]" />
            </div>
            <hr className="mt-3.5 mr-[5px] ml-[5px] border-[#d6d6d6]" />
            <h3 className="mt-[22px] pl-1 font-bold leading-4">Center</h3>
            <div className="mt-3 flex">
                <OriginGrid size={33} box={6} className="mt-2.5 ml-[13px]" />
                <div className="ml-3 flex flex-col gap-[5px]">
                    <div className="flex items-center gap-[5px]">
                        <label htmlFor="center-x" className="w-[25px] text-right">X:</label>
                        <SpinField id="center-x" value="106.117 mm" />
                    </div>
                    <div className="flex items-center gap-[5px]">
                        <label htmlFor="center-y" className="w-[25px] text-right">Y:</label>
                        <SpinField id="center-y" value="232.313 mm" />
                    </div>
                    <label className="ml-[30px] flex items-center gap-[3px] leading-4">
                        <input
                            type="checkbox"
                            checked={relative}
                            onChange={() => setRelative(!relative)}
                            className="size-[13px] appearance-none border border-[#b2b2b2] bg-white checked:bg-[#0078d7]"
                        />
                        Relative Center
                    </label>
                </div>
            </div>
            <div className="mt-3 flex items-center gap-[5px]">
                <label htmlFor="copies" className="w-[83px] text-right">Copies:</label>
                <SpinField id="copies" value="0" />
            </div>
            <div className="mt-5 pr-[3px] pl-[3px]">
                <button type="submit" className="h-6 w-full border border-[#b2b2b2] bg-[#e8e8e8]">Apply</button>
            </div>
        </form>
    );
}

const dockerTabs = [
    { icon: "hints", label: "Hints", className: "h-[77px] bg-[#d8d8d8]" },
    { icon: "properties", label: "Properties", className: "h-[102px] bg-[#d8d8d8]" },
    { icon: "objects", label: "Objects", className: "h-[90px] bg-[#d8d8d8]" },
    { icon: "transform", label: "Transform", className: "h-[102px] bg-[#cce1ff]" },
];

function Docker() {
    return (
        <section className="flex w-[313px] shrink-0 flex-col border-r border-[#d6d6d6]">
            <div className="flex h-[23px] items-center border-b border-[#b2b2b2] bg-[#e8e8e8] pl-[6px]">
                <h2 className="flex-1">Transform</h2>
                <button type="button" aria-label="Collapse docker" className="mr-[5px]">
                    <svg viewBox="0 0 10 8" className="h-2 w-2.5" fill="#b2b2b2">
                        <path d="M0 0v8l5-4zM5 0v8l5-4z" />
                    </svg>
                </button>
                <button type="button" aria-label="Close docker" className="mr-[3px]">
                    <Icon name="close" className="size-4 text-[#aaa]" />
                </button>
            </div>
            <div className="flex flex-1">
                <TransformDocker />
                <div className="flex w-[21px] flex-col border-l border-[#00a8ff] bg-[#e8e8e8]">
                    {dockerTabs.map(tab => (
                        <button key={tab.label} type="button" className={`flex w-full flex-col items-center gap-[5px] pt-[3px] ${tab.className}`}>
                            <Icon name={tab.icon} />
                            <span className="leading-4 [writing-mode:vertical-rl]">{tab.label}</span>
                        </button>
                    ))}
                    <button type="button" aria-label="Customize dockers" className="mt-1 flex justify-center">
                        <Icon name="plus" className="size-4 text-[#b2b2b2]" />
                    </button>
                </div>
            </div>
        </section>
    );
}

const swatches = [
    "#181a19", "#333333", "#4d4d4d", "#666664", "#808080", "#999999", "#b0b1b3", "#c5c6c6", "#d9dada", "#ebebeb", "#ffffff",
    "#3b2b98", "#009fd8", "#00a65a", "#fcdf15", "#df2a1c", "#e5007f", "#b04a8b", "#f07f00", "#ffb7bb", "#7d6e65", "#d8d2f1",
    "#aea3e2", "#7a94d3", "#8a72c8", "#938ab4", "#52658e", "#565169", "#70829c", "#0095d0", "#aedcf3", "#b4c9db", "#92a2aa", "#6a777d",
];

function ColorPalette() {
    return (
        <aside className="flex w-5 shrink-0 flex-col items-center">
            <div className="mt-0.5 h-[5px] w-4 bg-[radial-gradient(#aaa_1px,transparent_1px)] bg-[size:3px_3px]" />
            <button type="button" aria-label="Palette menu" className="mt-0.5">
                <Icon name="play" />
            </button>
            <button type="button" aria-label="Eyedropper" className="mt-1.5">
                <svg viewBox="0 0 12 12" className="size-3" fill="none" stroke="#b2b2b2" aria-hidden="true">
                    <path d="m.5 11.500 1-3 6-6 2 2-6 6z" />
                    <path d="m7 2 3 3M8.500 3 11 1" strokeWidth="2.500" />
                </svg>
            </button>
            <button type="button" aria-label="Scroll swatches up" className="mt-[3px]">
                <Icon name="chevronUp" className="size-4 text-[#c4c4c4]" />
            </button>
            <div className="mt-0.5 flex w-[18px] flex-col border border-b-[3px] border-[#4d4d4d]">
                <button type="button" aria-label="No color">
                    <NoColor className="size-4" />
                </button>
                {swatches.map(color => (
                    <button
                        key={color}
                        type="button"
                        aria-label={color}
                        className="h-[17px] border-t border-[#4d4d4d]"
                        style={{ backgroundColor: color }}
                    />
                ))}
            </div>
            <button type="button" aria-label="Scroll swatches down" className="flex">
                <Icon name="chevronDown" className="size-4 text-[#b2b2b2]" />
            </button>
            <button type="button" aria-label="Expand swatches" className="mt-0.5 flex">
                <Icon name="doubleRight" className="size-4 text-[#b2b2b2]" />
            </button>
        </aside>
    );
}

function StatusBar() {
    return (
        <footer className="flex h-[38px] items-center overflow-hidden border-t border-[#d6d6d6] pl-1">
            <ToolButton icon="gear" label="Status bar options" flyout />
            <p className="ml-[3px] w-[799px] shrink-0 whitespace-nowrap">
                Click an object twice for rotating/skewing; dbl-clicking tool selects all objects; Shift+click multi-selects; Alt+click digs; Ctrl+click selects in a group
            </p>
            <p className="w-[132px] shrink-0 whitespace-nowrap">Rectangle on Layer 1</p>
            <Icon name="fill" />
            <NoColor className="mx-0.5 size-[22px] border border-[#b2b2b2]" />
            <span className="ml-0.5 w-[157px] shrink-0">None</span>
            <Icon name="pen" />
            <span className="mr-1 size-[22px] shrink-0 border border-[#b2b2b2] bg-[#181a19]" />
            <span className="whitespace-pre">C:0 M:0 Y:0 K:100  0.500 pt</span>
            <span className="ml-auto h-[22px] w-px bg-[#d6d6d6]" />
            <Icon name="proofs" className="ml-2.5 size-[13px] text-[#333]" />
        </footer>
    );
}

export default function App() {
    return (
        <div className="flex min-h-screen flex-col overflow-hidden bg-[#f3f3f3] font-['Open_Sans','Noto_Sans',sans-serif] text-[12px] leading-4 text-black">
            <TitleBar />
            <MenuBar />
            <StandardBar />
            <PropertyBar />
            <div className="flex flex-1">
                <Toolbox />
                <DocumentArea />
                <div className="flex w-[5px] shrink-0 justify-center bg-white">
                    <div className="w-px bg-[#d0d0d0]" />
                </div>
                <Docker />
                <ColorPalette />
            </div>
            <StatusBar />
        </div>
    );
}
